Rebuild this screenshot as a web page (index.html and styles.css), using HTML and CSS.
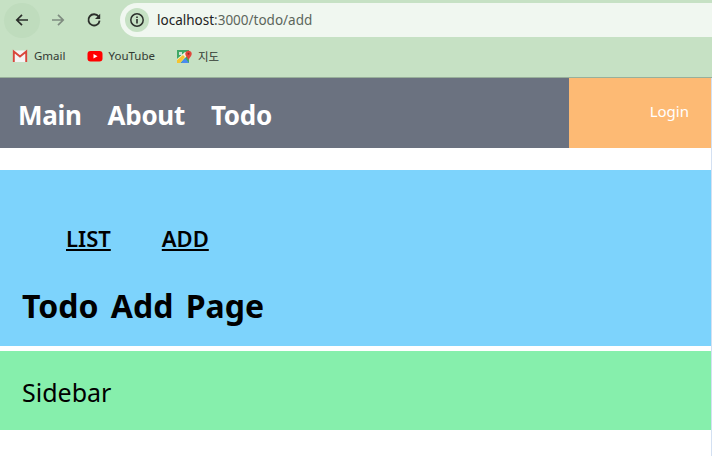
FILE: index.html
```html
<!DOCTYPE html>
<html lang="ko">
<head>
    <meta charset="UTF-8">
    <meta name="viewport" content="width=device-width, initial-scale=1.0">
    <title>Todo Add Page</title>
    <link rel="stylesheet" href="styles.css">
</head>
<body>
    <div class="browser">
        <div class="toolbar">
            <div class="nav-btn active">
                <svg width="16" height="16" viewBox="0 0 16 16"><path d="M14 8H3M8 2.8 2.8 8 8 13.2" fill="none" stroke="#2b2f2b" stroke-width="1.7"/></svg>
            </div>
            <div class="nav-btn">
                <svg width="16" height="16" viewBox="0 0 16 16"><path d="M2 8h11M8 2.8 13.2 8 8 13.2" fill="none" stroke="#7f8c80" stroke-width="1.7"/></svg>
            </div>
            <div class="nav-btn">
                <svg width="16" height="16" viewBox="0 0 16 16"><path d="M12.6 4.6A5.6 5.6 0 1 0 13.6 8.6" fill="none" stroke="#2b2f2b" stroke-width="1.8"/><path d="M14.2 1.8v5.2H9z" fill="#2b2f2b"/></svg>
            </div>
            <div class="address">
                <span class="info-icon">
                    <svg width="16" height="16" viewBox="0 0 16 16"><circle cx="8" cy="8" r="6.2" fill="none" stroke="#2b2f2b" stroke-width="1.5"/><path d="M8 7v4.4M8 4.4v1.5" stroke="#2b2f2b" stroke-width="1.6"/></svg>
                </span>
                <span class="url">localhost<span class="url-path">:3000/todo/add</span></span>
            </div>
        </div>
        <div class="bookmarks">
            <div class="bookmark">
                <svg width="16" height="16" viewBox="0 0 16 16"><path d="M1 2.5h14v11.5H1z" fill="#f4f4f4"/><path d="M1.8 14V3.5L8 8.6l6.2-5.1V14" fill="none" stroke="#d9463a" stroke-width="1.9"/></svg>
                <span>Gmail</span>
            </div>
            <div class="bookmark">
                <svg width="16" height="16" viewBox="0 0 16 16"><rect x="0.5" y="3" width="15" height="10.5" rx="3" fill="#f00"/><path d="M6.5 5.9v4.7L10.5 8.2z" fill="#fff"/></svg>
                <span>YouTube</span>
            </div>
            <div class="bookmark">
                <svg width="16" height="16" viewBox="0 0 16 16"><path d="M1 2h12v13H1z" fill="#3fa866"/><path d="M1 15V11L9 4h4v2L4 15z" fill="#f7f3e0"/><path d="M1 15V12L7 7l2 2-5 6z" fill="#f6c42f"/><path d="M5 15l4-5 4 5z" fill="#4a8af0"/><path d="M3 4h3v3H3z" fill="#cfe6d4"/><path d="M9.5 7a3.2 3.2 0 1 1 6 0c-.6 1.6-2 3-3 5-1-2-2.400-3.400-3-5z" fill="#e0483c"/><circle cx="12.500" cy="5.800" r="1" fill="#9c2a22"/></svg>
                <span>지도</span>
            </div>
        </div>
    </div>

    <div class="page">
        <nav class="top-nav">
            <ul class="menu">
                <li>Main</li>
                <li>About</li>
                <li>Todo</li>
            </ul>
            <div class="login">Login</div>
        </nav>

        <main class="content">
            <div class="sub-menu">
                <a href="#">LIST</a>
                <a href="#">ADD</a>
            </div>
            <h1 class="title">Todo Add Page</h1>
        </main>

        <aside class="sidebar">Sidebar</aside>
    </div>
</body>
</html>
```
FILE: styles.css
```css
* {
    box-sizing: border-box;
}
html, body {
    height: 100%;
}
body {
    margin: 0;
    display: flex;
    flex-direction: column;
    overflow: hidden;
    font-family: "Noto Sans", "Noto Sans CJK KR", sans-serif;
    background: white;
}

/* browser chrome */
.browser {
    height: 78px;
    background: #c6e1c4;
    border-bottom: 1px solid #98b09a;
}
.toolbar {
    display: flex;
    align-items: center;
    height: 40px;
    padding: 3px 0 3px 4px;
}
.nav-btn {
    width: 36px;
    height: 35px;
    display: flex;
    align-items: center;
    justify-content: center;
    border-radius: 50%;
}
.nav-btn.active {
    background: #bfdcbd;
}
.address {
    flex: 1;
    height: 34px;
    margin-left: 8px;
    padding-left: 5px;
    display: flex;
    align-items: center;
    gap: 8px;
    background: #f0f7f0;
    border-radius: 17px 0 0 17px;
}
.info-icon {
    width: 24px;
    height: 24px;
    display: flex;
    align-items: center;
    justify-content: center;
    border-radius: 50%;
    background: #c6e1c4;
}
.url {
    font-size: 13.5px;
    color: #222;
}
.url-path {
    color: #5c665c;
}
.bookmarks {
    display: flex;
    align-items: center;
    gap: 21px;
    height: 33px;
    padding: 0 0 2px 12px;
}
.bookmark {
    display: flex;
    align-items: center;
    gap: 6px;
    font-size: 11.5px;
    color: #333a33;
}

/* page */
.page {
    flex: 1;
    border-right: 1px solid #d3e0f2;
}
.top-nav {
    height: 70px;
    display: flex;
    background: #6b7280;
}
.menu {
    flex: 1;
    display: flex;
    align-items: center;
    gap: 26px;
    margin: 0;
    padding: 4px 0 0 18px;
    list-style: none;
    color: white;
    font-size: 26px;
    font-weight: 700;
    letter-spacing: -0.3px;
}
.login {
    width: 142px;
    padding: 0 22px 4px 0;
    display: flex;
    align-items: center;
    justify-content: flex-end;
    background: #fdba74;
    color: white;
    font-size: 15px;
}
.content {
    height: 176px;
    margin-top: 22px;
    padding: 53px 22px 0;
    background: #7dd3fc;
}
.sub-menu {
    display: flex;
    gap: 51px;
    padding-left: 44px;
    font-size: 22px;
    font-weight: 600;
}
.sub-menu a {
    color: black;
}
.title {
    margin: 31px 0 0;
    font-size: 32px;
    font-weight: 700;
    word-spacing: 4px;
    color: black;
}
.sidebar {
    height: 79px;
    margin-top: 5px;
    padding: 2px 0 0 22px;
    display: flex;
    align-items: center;
    background: #86efac;
    font-size: 25px;
    color: black;
}
```
